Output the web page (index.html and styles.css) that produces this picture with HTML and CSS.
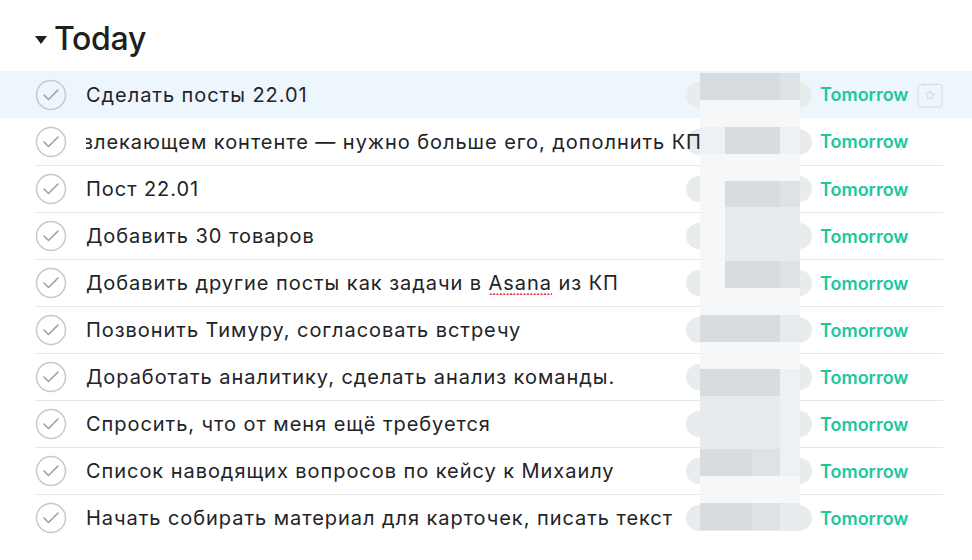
FILE: index.html
```html
<!DOCTYPE html>
<html lang="ru">
<head>
    <meta charset="UTF-8">
    <title>Today</title>
    <link rel="stylesheet" href="styles.css">
</head>
<body>
    <div class="page">
        <h1 class="section-title"><span class="caret"></span>Today</h1>

        <div class="task-list">
            <div class="task active">
                <div class="task-inner">
                    <svg class="check" viewBox="0 0 32 32"><circle cx="16" cy="16" r="14.5"/><path d="M9 16 L13.5 20.5 L23 11"/></svg>
                    <div class="task-name">Сделать посты 22.01</div>
                    <div class="assignee"></div>
                    <div class="due">Tomorrow</div>
                    <svg class="due-icon" viewBox="0 0 26 26"><rect x="1" y="2.5" width="24" height="22.5" rx="2"/><path d="M7 1 V4 M19 1 V4"/><path class="star" d="M13 8.5 L14.4 11.6 L17.7 11.9 L15.2 14.1 L15.9 17.4 L13 15.7 L10.1 17.4 L10.8 14.1 L8.3 11.9 L11.6 11.6 Z"/></svg>
                </div>
            </div>
            <div class="task">
                <div class="task-inner">
                    <svg class="check" viewBox="0 0 32 32"><circle cx="16" cy="16" r="14.5"/><path d="M9 16 L13.5 20.5 L23 11"/></svg>
                    <div class="task-name scrolled">о вовлекающем контенте — нужно больше его, дополнить КП</div>
                    <div class="assignee"></div>
                    <div class="due">Tomorrow</div>
                </div>
            </div>
            <div class="task">
                <div class="task-inner">
                    <svg class="check" viewBox="0 0 32 32"><circle cx="16" cy="16" r="14.5"/><path d="M9 16 L13.5 20.5 L23 11"/></svg>
                    <div class="task-name">Пост 22.01</div>
                    <div class="assignee"></div>
                    <div class="due">Tomorrow</div>
                </div>
            </div>
            <div class="task">
                <div class="task-inner">
                    <svg class="check" viewBox="0 0 32 32"><circle cx="16" cy="16" r="14.5"/><path d="M9 16 L13.5 20.5 L23 11"/></svg>
                    <div class="task-name">Добавить 30 товаров</div>
                    <div class="assignee"></div>
                    <div class="due">Tomorrow</div>
                </div>
            </div>
            <div class="task">
                <div class="task-inner">
                    <svg class="check" viewBox="0 0 32 32"><circle cx="16" cy="16" r="14.5"/><path d="M9 16 L13.5 20.5 L23 11"/></svg>
                    <div class="task-name">Добавить другие посты как задачи в <span class="misspelled">Asana</span> из КП</div>
                    <div class="assignee"></div>
                    <div class="due">Tomorrow</div>
                </div>
            </div>
            <div class="task">
                <div class="task-inner">
                    <svg class="check" viewBox="0 0 32 32"><circle cx="16" cy="16" r="14.5"/><path d="M9 16 L13.5 20.5 L23 11"/></svg>
                    <div class="task-name">Позвонить Тимуру, согласовать встречу</div>
                    <div class="assignee"></div>
                    <div class="due">Tomorrow</div>
                </div>
            </div>
            <div class="task">
                <div class="task-inner">
                    <svg class="check" viewBox="0 0 32 32"><circle cx="16" cy="16" r="14.5"/><path d="M9 16 L13.5 20.5 L23 11"/></svg>
                    <div class="task-name">Доработать аналитику, сделать анализ команды.</div>
                    <div class="assignee"></div>
                    <div class="due">Tomorrow</div>
                </div>
            </div>
            <div class="task">
                <div class="task-inner">
                    <svg class="check" viewBox="0 0 32 32"><circle cx="16" cy="16" r="14.5"/><path d="M9 16 L13.5 20.5 L23 11"/></svg>
                    <div class="task-name">Спросить, что от меня ещё требуется</div>
                    <div class="assignee"></div>
                    <div class="due">Tomorrow</div>
                </div>
            </div>
            <div class="task">
                <div class="task-inner">
                    <svg class="check" viewBox="0 0 32 32"><circle cx="16" cy="16" r="14.5"/><path d="M9 16 L13.5 20.5 L23 11"/></svg>
                    <div class="task-name">Список наводящих вопросов по кейсу к Михаилу</div>
                    <div class="assignee"></div>
                    <div class="due">Tomorrow</div>
                </div>
            </div>
            <div class="task">
                <div class="task-inner">
                    <svg class="check" viewBox="0 0 32 32"><circle cx="16" cy="16" r="14.5"/><path d="M9 16 L13.5 20.5 L23 11"/></svg>
                    <div class="task-name">Начать собирать материал для карточек, писать текст</div>
                    <div class="assignee"></div>
                    <div class="due">Tomorrow</div>
                </div>
            </div>

            <!-- pixelated redaction over the assignee column -->
            <div class="redact">
                <i class="a"></i><i class="a"></i><i class="a"></i><i class="b"></i>
                <i class="e"></i><i class="e"></i><i class="e"></i><i class="e"></i>
                <i class="d"></i><i class="a"></i><i class="a"></i><i class="d"></i>
                <i class="e"></i><i class="e"></i><i class="e"></i><i class="e"></i>
                <i class="e"></i><i class="a"></i><i class="a"></i><i class="b"></i>
                <i class="e"></i><i class="c"></i><i class="c"></i><i class="c"></i>
                <i class="e"></i><i class="c"></i><i class="c"></i><i class="c"></i>
                <i class="e"></i><i class="a"></i><i class="a"></i><i class="b"></i>
                <i class="e"></i><i class="e"></i><i class="e"></i><i class="e"></i>
                <i class="a"></i><i class="a"></i><i class="a"></i><i class="c"></i>
                <i class="e"></i><i class="e"></i><i class="e"></i><i class="e"></i>
                <i class="a"></i><i class="a"></i><i class="a"></i><i class="d"></i>
                <i class="c"></i><i class="c"></i><i class="c"></i><i class="d"></i>
                <i class="c"></i><i class="c"></i><i class="c"></i><i class="d"></i>
                <i class="a"></i><i class="a"></i><i class="b"></i><i class="d"></i>
                <i class="e"></i><i class="e"></i><i class="e"></i><i class="e"></i>
                <i class="a"></i><i class="a"></i><i class="b"></i><i class="c"></i>
            </div>
        </div>
    </div>
</body>
</html>
```

FILE: styles.css
```css
body {
    margin: 0;
    background: #fff;
    color: #1e1f21;
    font-family: Inter, "Noto Sans", sans-serif;
}
.page {
    padding-top: 19px;
}
.section-title {
    display: flex;
    align-items: center;
    margin: 0 0 12px 35px;
    font-size: 32px;
    font-weight: 500;
    line-height: 40px;
    letter-spacing: -0.3px;
}
.caret {
    width: 0;
    height: 0;
    border-left: 6.5px solid transparent;
    border-right: 6.5px solid transparent;
    border-top: 8px solid #1e1f21;
    margin: 2px 7px 0 0;
}
.task-list {
    position: relative;
}
.task {
    padding: 0 29px 0 35px;
}
.task.active {
    background: #edf6fc;
}
.task + .task:not(.active) + .task .task-inner {
    border-top: 1px solid #e6e7e8;
}
.task-inner {
    display: grid;
    grid-template-columns: 32px 1fr 126px 105px 26px;
    align-items: center;
    height: 47px;
    box-sizing: border-box;
}
.check {
    width: 32px;
    height: 32px;
    fill: none;
    stroke-linecap: round;
    stroke-linejoin: round;
}
.check circle {
    stroke: #c6c9cc;
    stroke-width: 1.5;
}
.check path {
    stroke: #9da1a5;
    stroke-width: 1.6;
}
.task-name {
    min-width: 0;
    margin-left: 19px;
    margin-right: -14px;
    position: relative;
    z-index: 1;
    font-size: 20px;
    letter-spacing: 0.95px;
    white-space: nowrap;
    overflow: hidden;
    color: #222326;
}
.task-name.scrolled {
    text-indent: -49px;
}
.misspelled {
    padding-bottom: 1px;
    background-image: radial-gradient(circle, #ec3f4b 1px, transparent 1.4px);
    background-size: 3.4px 3px;
    background-repeat: repeat-x;
    background-position: 0 100%;
}
.assignee {
    height: 26px;
    border-radius: 13px;
    background: #e9eced;
}
.due {
    padding-left: 8px;
    color: #1cc89b;
    font-size: 18px;
    font-weight: 600;
}
.due-icon {
    width: 26px;
    height: 26px;
    fill: none;
    stroke: #d5dadf;
    stroke-width: 1;
}
.redact {
    position: absolute;
    left: 700px;
    top: 2px;
    display: grid;
    grid-template-columns: 25px 27px 28px 20px;
    grid-auto-rows: 26.9px;
    z-index: 2;
}
.redact .a { background: #d6dce0; }
.redact .b { background: #dde2e6; }
.redact .c { background: #e8ebee; }
.redact .d { background: #eef1f3; }
.redact .e { background: #f5f7f8; }
```
